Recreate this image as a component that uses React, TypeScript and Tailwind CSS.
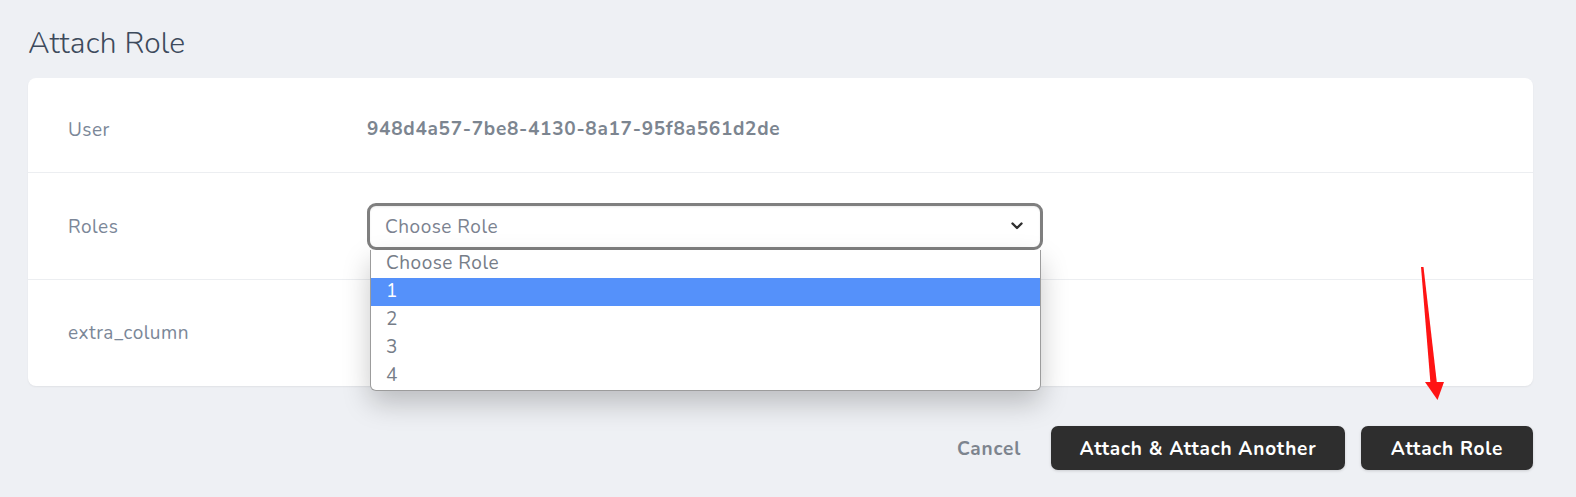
import React from "react";

export default function App() {
  const options = ["Choose Role", "1", "2", "3", "4"];
  return (
    <div className="relative min-h-[497px] bg-[#eef0f4] pl-[28px] pr-[43px] font-['Nunito','Lato',sans-serif]">
      <h1 className="pt-[26px] text-[30px] leading-[36px] font-light text-[#3d4a5c] tracking-[0.2px]">
        Attach Role
      </h1>
      <div className="mt-[16px] rounded-lg bg-white shadow-[0_1px_2px_rgba(0,0,0,0.06)]">
        <div className="flex h-[95px] items-center border-b border-[#eceef1]">
          <div className="w-[339px] pl-[40px] pt-[10px] text-[19px] tracking-[0.5px] text-[#7b8798]">User</div>
          <div className="pt-[8px] text-[19px] font-bold tracking-[0.7px] text-[#7c8590]">
            948d4a57-7be8-4130-8a17-95f8a561d2de
          </div>
        </div>
        <div className="flex h-[107px] items-center border-b border-[#eceef1]">
          <div className="w-[339px] pl-[40px] pt-[2px] text-[19px] tracking-[0.5px] text-[#7b8798]">Roles</div>
          <div className="relative">
            <div className="flex h-[47px] w-[676px] items-center justify-between rounded-[9px] border-[3px] border-[#7f7f7f] bg-white pl-[15px] pr-[17px] shadow-[inset_0_1px_2px_rgba(0,0,0,0.08)]">
              <span className="pt-[2px] text-[19px] tracking-[0.5px] text-[#7b8290]">Choose Role</span>
              <svg width="12" height="8" viewBox="0 0 12 8" fill="none">
                <path d="M1.5 1.5 L6 6 L10.5 1.5" stroke="#2f2f2f" strokeWidth="2.4" strokeLinecap="round" strokeLinejoin="round" />
              </svg>
            </div>
            <div className="absolute left-[3px] top-[47px] z-10 w-[671px] overflow-hidden rounded-b-[6px] border border-t-0 border-[#9c9c9c] bg-white shadow-[0_12px_28px_rgba(0,0,0,0.22)]">
              {options.map((o, i) => (
                <div
                  key={o}
                  className={
                    i === 1
                      ? "flex h-[28px] items-center bg-[#5591fa] pl-[15px] text-[19px] tracking-[0.5px] text-white"
                      : "flex h-[28px] items-center pl-[15px] text-[19px] tracking-[0.5px] text-[#767d88]"
                  }
                >
                  {o}
                </div>
              ))}
            </div>
          </div>
        </div>
        <div className="flex h-[106px] items-center">
          <div className="w-[339px] pl-[40px] text-[19px] tracking-[0.5px] text-[#7b8798]">extra_column</div>
        </div>
      </div>
      <div className="mt-[40px] flex items-center justify-end">
        <button className="mr-[30px] pt-[3px] text-[19px] font-bold tracking-[0.8px] text-[#7d848e]">Cancel</button>
        <button className="mr-[16px] h-[44px] w-[294px] rounded-[7px] bg-[#2e2e2e] pt-[3px] text-[19px] font-bold tracking-[0.8px] text-white shadow-[0_1px_3px_rgba(0,0,0,0.15)]">
          Attach &amp; Attach Another
        </button>
        <button className="h-[44px] w-[172px] rounded-[7px] bg-[#2e2e2e] pt-[3px] text-[19px] font-bold tracking-[0.8px] text-white shadow-[0_1px_3px_rgba(0,0,0,0.15)]">
          Attach Role
        </button>
      </div>
      <svg className="pointer-events-none absolute left-[1415px] top-[262px]" width="40" height="145" viewBox="0 0 40 145">
        <polygon points="6,5 8.5,5 22,122 15.5,122" fill="#ff1414" />
        <polygon points="10,120 29,120 22.5,138" fill="#ff1414" />
      </svg>
    </div>
  );
}
